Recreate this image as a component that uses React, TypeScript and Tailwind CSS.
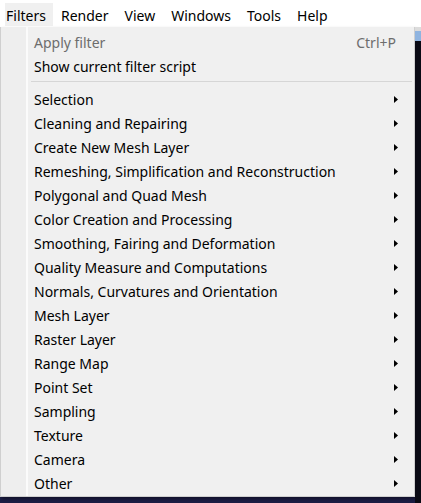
import React from "react";

const items = [
  "Selection",
  "Cleaning and Repairing",
  "Create New Mesh Layer",
  "Remeshing, Simplification and Reconstruction",
  "Polygonal and Quad Mesh",
  "Color Creation and Processing",
  "Smoothing, Fairing and Deformation",
  "Quality Measure and Computations",
  "Normals, Curvatures and Orientation",
  "Mesh Layer",
  "Raster Layer",
  "Range Map",
  "Point Set",
  "Sampling",
  "Texture",
  "Camera",
  "Other",
];

const Arrow = () => (
  <svg width="4" height="7" viewBox="0 0 4 7" className="block">
    <path d="M0 0 L4 3.5 L0 7 Z" fill="#000" />
  </svg>
);

export default function App() {
  return (
    <div
      className="w-[421px] h-[503px] overflow-hidden bg-[#1c1d45] flex flex-col text-[14px] text-black"
      style={{ fontFamily: '"Noto Sans", "Open Sans", sans-serif' }}
    >
      <div className="h-[27px] bg-white flex items-start pt-[3px] pl-[5px] shrink-0">
        <div className="h-[23px] pl-[1px] flex items-center bg-[#f0f0f0] w-[48px] pt-[2px]">Filters</div>
        <div className="flex items-center gap-[16px] ml-[8px] h-[23px] pt-[2px]">
          <span>Render</span>
          <span>View</span>
          <span>Windows</span>
          <span>Tools</span>
          <span>Help</span>
        </div>
      </div>
      <div className="flex flex-1 min-h-0">
        <div className="w-[415px] h-[470px] bg-[#f0f0f0] border border-[#cfcfcf] border-t-0 flex shadow-[2px_2px_3px_rgba(0,0,0,0.4)]">
          <div className="w-[27px] bg-[#eeeeee] border-r-2 border-[#fbfbfb] shrink-0" />
          <div className="flex-1 flex flex-col pt-[3px] pr-[2px]">
            <div className="h-[24px] flex items-center pl-[6px] pr-[16px] text-[#6d6d6d]">
              <span className="flex-1">Apply filter</span>
              <span>Ctrl+P</span>
            </div>
            <div className="h-[24px] flex items-center pl-[6px]">Show current filter script</div>
            <div className="h-[6px] flex items-center pl-[3px]">
              <div className="h-px w-full bg-[#d6d6d6]" />
            </div>
            <div className="h-[3px]" />
            {items.map((t) => (
              <div key={t} className="h-[24px] flex items-center pl-[6px] pr-[14px]">
                <span className="flex-1">{t}</span>
                <Arrow />
              </div>
            ))}
          </div>
        </div>
        <div className="flex-1 flex flex-col">
          <div className="h-[4px] bg-[#dcdcdc]" />
          <div className="h-[10px] bg-[#8fb4e0]" />
          <div className="flex-1 bg-[#0a0a14]" />
        </div>
      </div>
    </div>
  );
}
